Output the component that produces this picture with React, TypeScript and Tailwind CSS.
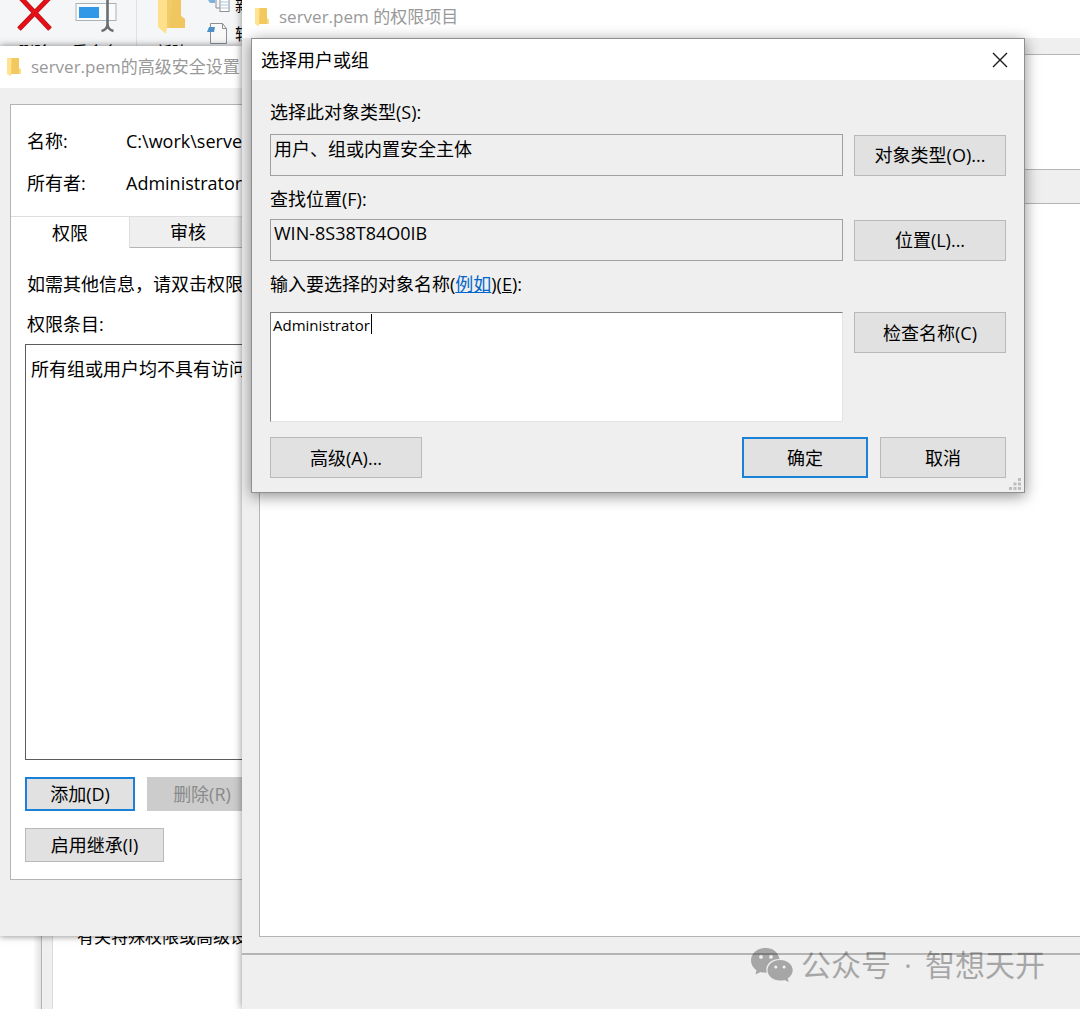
import type { ReactNode } from 'react';

type ButtonProps = {
    children: ReactNode;
    className?: string;
    primary?: boolean;
    disabled?: boolean;
};

function WinButton({ children, className = '', primary = false, disabled = false }: ButtonProps) {
    const look = disabled
        ? 'border border-[#cccccc] bg-[#cccccc] text-[#8a8a8a]'
        : primary
            ? 'border-2 border-[#1a80d8] bg-[#e1e1e1]'
            : 'border border-[#b9b9b9] bg-[#e1e1e1]';

    return (
        <button
            type="button"
            disabled={disabled}
            className={`flex shrink-0 items-center justify-center whitespace-nowrap ${look} ${className}`}
        >
            {children}
        </button>
    );
}

function FolderIcon({ className = '' }: { className?: string }) {
    return (
        <svg className={`shrink-0 ${className}`} viewBox="0 0 14 20" aria-hidden="true">
            <path d="M4 1h8v10l2 2v4H4z" fill="#f2c85f" />
            <path d="M0 1h4.5v1L4 19.5 0 17z" fill="#ffe391" />
            <path d="M12 11l2 2v4h-2z" fill="#f7dc8b" />
        </svg>
    );
}

function Ribbon() {
    return (
        <div className="flex h-[46px] shrink-0 overflow-hidden bg-[#f5f6f7] text-base leading-6 whitespace-nowrap">
            <div className="flex w-[68px] shrink-0 flex-col items-center">
                <svg className="h-10 w-9 shrink-0" viewBox="0 0 36 40" aria-hidden="true">
                    <path d="M3 -4L34 29M35 -4L3 29" stroke="#b5131b" strokeWidth="5" />
                    <path d="M3 -4L34 29M35 -4L3 29" stroke="#e60f17" strokeWidth="3.6" />
                </svg>
                <span>删除</span>
            </div>
            <div className="flex w-[56px] shrink-0 flex-col items-center">
                <svg className="h-10 w-11 shrink-0" viewBox="0 0 44 40" fill="none" aria-hidden="true">
                    <rect x="2" y="3.5" width="40" height="17" fill="#f9fafb" stroke="#adb1b5" />
                    <rect x="5" y="7" width="20" height="11" fill="#3198e8" />
                    <path d="M33.5 0v24c0 4-2 6-6 7M33.5 24c0 4 2 6 6 7" stroke="#6b6e70" strokeWidth="2.6" />
                </svg>
                <span>重命名</span>
            </div>
            <div className="ml-3 flex w-[71px] shrink-0 flex-col items-center border-l border-[#dfe1e3]">
                <svg className="h-10 w-8 shrink-0" viewBox="0 0 32 40" aria-hidden="true">
                    <path d="M9 0h16v16l4 3v9H9z" fill="#f2cc6b" />
                    <path d="M17 0h8v16l4 3v9H13z" fill="#eebf53" opacity=".5" />
                    <path d="M2 0h9v26l-1 8-8-7z" fill="#ffe08a" />
                </svg>
                <span>新建</span>
            </div>
            <div className="flex shrink-0 flex-col">
                <div className="flex h-4 items-center gap-1">
                    <svg className="h-4 w-6 shrink-0" viewBox="0 0 24 16" fill="none" aria-hidden="true">
                        <path d="M1 0h7v3H3z" fill="#7fb3dd" />
                        <path d="M9 0v8h7" stroke="#8a8f94" />
                        <rect x="13" y="-4" width="9" height="15.5" fill="#fff" stroke="#8a8f94" />
                        <path d="M14 2h7M14 5h7M14 8h7" stroke="#a9c5dc" />
                    </svg>
                    <span className="h-7">新</span>
                </div>
                <div className="mt-1 flex h-7 items-center gap-1">
                    <svg className="h-7 w-6 shrink-0" viewBox="0 0 24 28" fill="none" aria-hidden="true">
                        <path d="M3.5 3.5h12l4 5v15h-16z" fill="#f8f8f8" stroke="#8a8f94" />
                        <path d="M15.5 3.5v5h4" stroke="#8a8f94" />
                        <path d="M2 7h6l-1 5H0z" fill="#4f8fc7" />
                    </svg>
                    <span>轻</span>
                </div>
            </div>
        </div>
    );
}

function AdvancedSecurityWindow() {
    return (
        <section className="relative flex h-[890px] shrink-0 flex-col bg-[#efefef] pb-14 text-lg leading-6 whitespace-nowrap shadow-[0_0_7px_rgba(0,0,0,0.5)]">
            <header className="flex h-[42px] shrink-0 items-center gap-[10px] bg-white pl-[7px] text-[#999999]">
                <FolderIcon className="h-5 w-[14px]" />
                <h2 className="text-[17px]">server.pem的高级安全设置</h2>
            </header>
            <div className="mt-4 ml-[10px] flex flex-1 flex-col border-y border-l border-[#b4b4b4] bg-white">
                <dl className="grid grid-cols-[99px_1fr] gap-y-[18px] pt-6 pb-[21px] pl-4">
                    <dt>名称:</dt>
                    <dd>C:\work\serve</dd>
                    <dt>所有者:</dt>
                    <dd>Administrators</dd>
                </dl>
                <div role="tablist" className="flex h-8 border-t border-[#dddddd]">
                    <button type="button" role="tab" aria-selected="true" className="w-[119px] border-r border-[#dddddd] bg-white">
                        权限
                    </button>
                    <button type="button" role="tab" aria-selected="false" className="flex-1 border-b border-[#b4b4b4] bg-[#efefef] pl-1">
                        审核
                    </button>
                </div>
                <div className="flex flex-1 flex-col pl-[14px]">
                    <p className="mt-6 pl-[2px]">如需其他信息，请双击权限</p>
                    <p className="mt-4 pl-[2px]">权限条目:</p>
                    <div className="mt-2 flex-1 border-y border-l border-[#5c5c5c] pt-3 pl-[5px]">所有组或用户均不具有访问</div>
                    <div className="mt-[17px] flex gap-3">
                        <WinButton primary className="h-[34px] w-[110px]">添加(D)</WinButton>
                        <WinButton disabled className="h-[34px] w-[110px]">删除(R)</WinButton>
                    </div>
                    <WinButton className="mt-[17px] mb-[17px] h-[34px] w-[139px]">启用继承(I)</WinButton>
                </div>
            </div>
        </section>
    );
}

function PropertiesWindow() {
    return (
        <section className="flex flex-1 bg-white">
            <div className="w-[41px] shrink-0 bg-linear-to-r from-white from-80% to-[#e2e2e2]" />
            <div className="w-3 shrink-0 border-x border-l-[#b4b4b4] border-r-[#dcdcdc] bg-[#efefef]" />
            <p className="-mt-[11px] pl-6 text-[17px] leading-6 whitespace-nowrap">有关特殊权限或高级设</p>
        </section>
    );
}

function PermissionEntryWindow() {
    return (
        <section className="relative flex flex-1 flex-col bg-[#efefef] shadow-[0_0_8px_rgba(0,0,0,0.45)]">
            <header className="flex h-[38px] shrink-0 items-center gap-[10px] bg-white pb-1 pl-[13px] text-[#999999]">
                <FolderIcon className="h-5 w-[14px]" />
                <h2 className="text-[17px] leading-6">server.pem 的权限项目</h2>
            </header>
            <div className="mt-4 ml-[17px] h-[116px] shrink-0 border-y border-l border-[#b4b4b4] bg-white" />
            <div className="mt-[33px] mb-4 ml-[17px] flex-1 border-y border-l border-[#b4b4b4] bg-white" />
            <footer className="h-14 shrink-0 border-t-2 border-[#b4b4b4]" />
        </section>
    );
}

function ReadonlyField({ id, value }: { id: string; value: string }) {
    return (
        <input
            id={id}
            readOnly
            value={value}
            className="h-[42px] min-w-0 flex-1 border border-[#a0a0a0] bg-[#efefef] px-[3px] pb-[14px] outline-none"
        />
    );
}

function SelectUsersDialog() {
    return (
        <div
            role="dialog"
            aria-labelledby="dialog-title"
            className="absolute top-[38px] right-[55px] left-[251px] border border-[#8f8f8f] bg-[#efefef] text-lg leading-6 shadow-[0_3px_14px_rgba(0,0,0,0.45)]"
        >
            <header className="flex h-[41px] items-center justify-between bg-white pr-4 pl-[9px]">
                <h1 id="dialog-title">选择用户或组</h1>
                <button type="button" aria-label="关闭">
                    <svg className="size-4" viewBox="0 0 16 16" stroke="#1a1a1a" strokeWidth="1.4" aria-hidden="true">
                        <path d="M1 1l14 14M15 1L1 15" />
                    </svg>
                </button>
            </header>

            <form className="px-[18px] pt-5 pb-[14px]">
                <label htmlFor="object-type" className="block">选择此对象类型(S):</label>
                <div className="mt-[10px] flex items-center gap-[11px]">
                    <ReadonlyField id="object-type" value="用户、组或内置安全主体" />
                    <WinButton className="h-[41px] w-[152px]">对象类型(O)...</WinButton>
                </div>

                <label htmlFor="location" className="mt-[11px] block">查找位置(F):</label>
                <div className="mt-2 flex items-center gap-[11px]">
                    <ReadonlyField id="location" value="WIN-8S38T84O0IB" />
                    <WinButton className="h-[41px] w-[152px]">位置(L)...</WinButton>
                </div>

                <label htmlFor="names" className="mt-[11px] block">
                    输入要选择的对象名称(<a href="#examples" className="text-[#0066cc] underline">例如</a>)(<u>E</u>):
                </label>
                <div className="mt-4 flex items-start gap-[11px]">
                    <div className="relative flex min-w-0 flex-1">
                        <textarea
                            id="names"
                            defaultValue="Administrator"
                            className="h-[110px] w-full resize-none border border-t-[#7f7f7f] border-r-[#e3e3e3] border-b-[#e3e3e3] border-l-[#7f7f7f] bg-white px-[2px] text-[15px] outline-none"
                        />
                        {/* text cursor */}
                        <span className="absolute top-[2px] left-[101px] h-5 w-px bg-black" />
                    </div>
                    <WinButton className="h-[41px] w-[152px]">检查名称(C)</WinButton>
                </div>

                <div className="mt-[15px] flex">
                    <WinButton className="h-[41px] w-[152px]">高级(A)...</WinButton>
                    <WinButton primary className="mr-3 ml-auto h-[41px] w-[126px]">确定</WinButton>
                    <WinButton className="h-[41px] w-[126px]">取消</WinButton>
                </div>
            </form>

            <svg className="absolute right-[3px] bottom-[2px] size-3" viewBox="0 0 12 12" fill="#bdbdbd" aria-hidden="true">
                <path d="M9 0h3v3H9zM4.5 4.5h3v3h-3zM9 4.5h3v3H9zM0 9h3v3H0zM4.5 9h3v3h-3zM9 9h3v3H9z" />
            </svg>
        </div>
    );
}

function Watermark() {
    return (
        <div className="absolute right-[35px] bottom-6 flex items-center text-3xl leading-10 whitespace-nowrap text-black opacity-30">
            <svg className="mr-2 h-[34px] w-[42px]" viewBox="0 0 42 34" fill="currentColor" aria-hidden="true">
                <path
                    fillRule="evenodd"
                    d="M15 0C6.500 0 0 5.500 0 12.500c0 4 2 7.300 5.500 9.700L4.500 26.500l5-2.600c1.900.6 3.900.9 6.300.9C13.500 17.500 19.500 11 28.500 11 27.500 4.500 22 0 15 0zM10 7a1.900 1.900 0 1 1 0 3.800A1.900 1.900 0 0 1 10 7zm10 0a1.900 1.900 0 1 1 0 3.800A1.900 1.900 0 0 1 20 7z"
                />
                <path
                    fillRule="evenodd"
                    d="M29 12c-7 0-12.500 4.600-12.500 10.300S22 32.500 29 32.500c1.600 0 3.100-.2 4.500-.6l4.300 2.100-1.100-3.600c3.200-2 5-5 5-8.100C41.700 16.600 36 12 29 12zm-4.200 5.400a1.600 1.600 0 1 1 0 3.200 1.600 1.600 0 0 1 0-3.200zm8.300 0a1.600 1.600 0 1 1 0 3.200 1.600 1.600 0 0 1 0-3.200z"
                />
            </svg>
            <span>公众号</span>
            <span className="w-[34px] text-center">·</span>
            <span>智想天开</span>
        </div>
    );
}

export default function App() {
    return (
        <main className="relative flex min-h-screen overflow-hidden bg-white font-['Open_Sans','Noto_Sans_CJK_SC',sans-serif] text-black">
            <div className="flex w-[242px] shrink-0 flex-col overflow-hidden">
                <Ribbon />
                <AdvancedSecurityWindow />
                <PropertiesWindow />
            </div>
            <PermissionEntryWindow />
            <SelectUsersDialog />
            <Watermark />
        </main>
    );
}
